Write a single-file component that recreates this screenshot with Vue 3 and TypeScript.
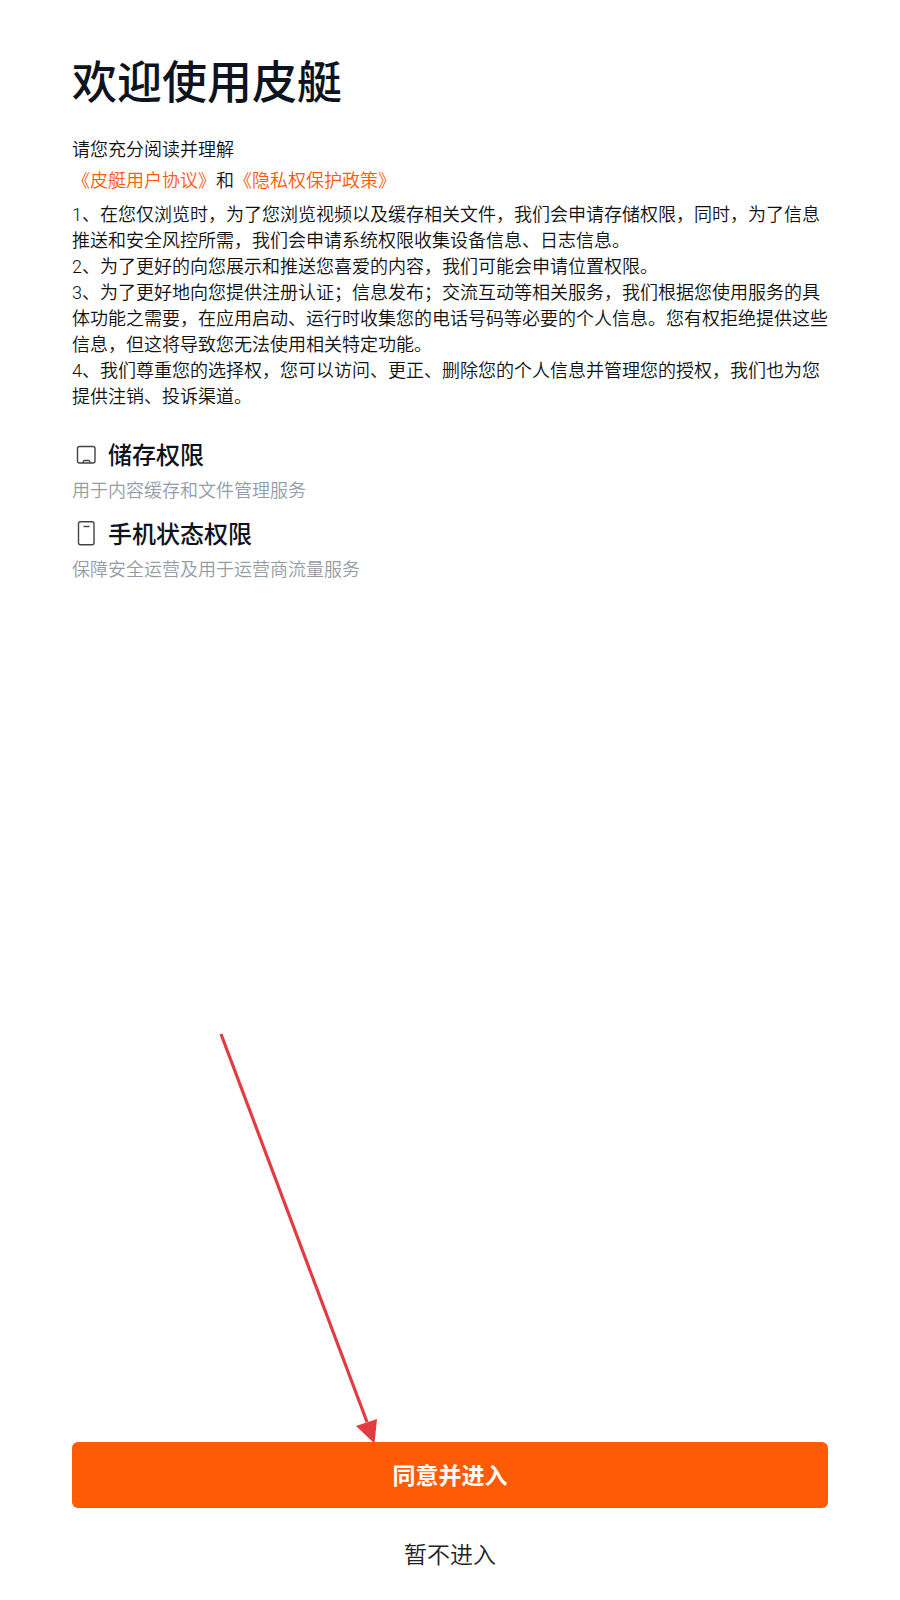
<script setup lang="ts">
interface Permission {
  icon: 'storage' | 'phone'
  title: string
  detail: string
}

const terms: string[] = [
  '1、在您仅浏览时，为了您浏览视频以及缓存相关文件，我们会申请存储权限，同时，为了信息推送和安全风控所需，我们会申请系统权限收集设备信息、日志信息。',
  '2、为了更好的向您展示和推送您喜爱的内容，我们可能会申请位置权限。',
  '3、为了更好地向您提供注册认证；信息发布；交流互动等相关服务，我们根据您使用服务的具体功能之需要，在应用启动、运行时收集您的电话号码等必要的个人信息。您有权拒绝提供这些信息，但这将导致您无法使用相关特定功能。',
  '4、我们尊重您的选择权，您可以访问、更正、删除您的个人信息并管理您的授权，我们也为您提供注销、投诉渠道。',
]

const permissions: Permission[] = [
  { icon: 'storage', title: '储存权限', detail: '用于内容缓存和文件管理服务' },
  { icon: 'phone', title: '手机状态权限', detail: '保障安全运营及用于运营商流量服务' },
]
</script>

<template>
  <main class="page" lang="zh-CN">
    <h1 class="title">欢迎使用皮艇</h1>

    <p class="intro">请您充分阅读并理解</p>
    <p class="intro"><a href="#agreement">《皮艇用户协议》</a>和<a href="#privacy">《隐私权保护政策》</a></p>

    <div class="terms">
      <p v-for="term in terms" :key="term">{{ term }}</p>
    </div>

    <section v-for="item in permissions" :key="item.title" class="permission">
      <h2 class="permission-title">
        <svg class="icon" viewBox="0 0 28 28" aria-hidden="true">
          <template v-if="item.icon === 'storage'">
            <rect x="5.500" y="4.500" width="17.500" height="16.500" rx="2" />
            <path d="M10.500 21l1.500-2.500h5l1.500 2.500" />
          </template>
          <template v-else>
            <rect x="6.500" y="0.700" width="15.500" height="23" rx="2" />
            <path d="M11.500 5.500h6" />
          </template>
        </svg>
        {{ item.title }}
      </h2>
      <p class="permission-detail">{{ item.detail }}</p>
    </section>

    <footer class="actions">
      <svg class="arrow" viewBox="0 0 160 412" aria-hidden="true">
        <path class="arrow-line" d="M3 2L149 390" />
        <path class="arrow-head" d="M138 394L159 387L156.500 411.500Z" />
      </svg>
      <button type="button" class="agree">同意并进入</button>
      <button type="button" class="decline">暂不进入</button>
    </footer>
  </main>
</template>

<style>
body {
  margin: 0;
  background: #fff;
}
</style>

<style scoped>
.page {
  box-sizing: border-box;
  display: flex;
  flex-direction: column;
  min-height: 100vh;
  padding: 50px 72px 23px;
  font-family: Roboto, "Noto Sans CJK SC", sans-serif;
  font-size: 18px;
  font-weight: 350;
  line-height: 26px;
  color: #111;
}

h1,
h2,
p {
  margin: 0;
}

.title {
  margin-bottom: 16px;
  font-size: 45px;
  font-weight: 500;
  line-height: 68px;
  color: #0d1420;
}

.intro {
  line-height: 31px;
}

.intro a {
  color: #ff5a05;
  text-decoration: none;
}

.terms {
  margin: 6px 0 28px;
}

.permission {
  margin-bottom: 9px;
}

.permission-title {
  display: flex;
  align-items: center;
  gap: 8px;
  font-size: 24px;
  font-weight: 500;
  line-height: 36px;
  color: #0d1420;
}

.permission-detail {
  line-height: 34px;
  color: #949ca8;
}

.icon {
  flex: none;
  width: 28px;
  height: 28px;
  fill: none;
  stroke: #444;
  stroke-width: 1.4;
}

.actions {
  position: relative;
  display: flex;
  flex-direction: column;
  gap: 26px;
  margin-top: auto;
}

.arrow {
  position: absolute;
  bottom: 100%;
  left: 146px;
  width: 160px;
  height: 412px;
  margin-bottom: -2px;
  pointer-events: none;
}

.arrow-line {
  fill: none;
  stroke: #e33c40;
  stroke-width: 3.2;
}

.arrow-head {
  fill: #e33c40;
}

.agree,
.decline {
  padding: 0;
  border: 0;
  background: none;
  font: inherit;
  font-size: 23px;
  cursor: pointer;
}

.agree {
  padding: 18px 0 14px;
  border-radius: 6px;
  background: #ff5a05;
  font-weight: 700;
  line-height: 34px;
  color: #fff;
}

.decline {
  align-self: center;
  padding-top: 1px;
  line-height: 42px;
  color: #222;
}
</style>
